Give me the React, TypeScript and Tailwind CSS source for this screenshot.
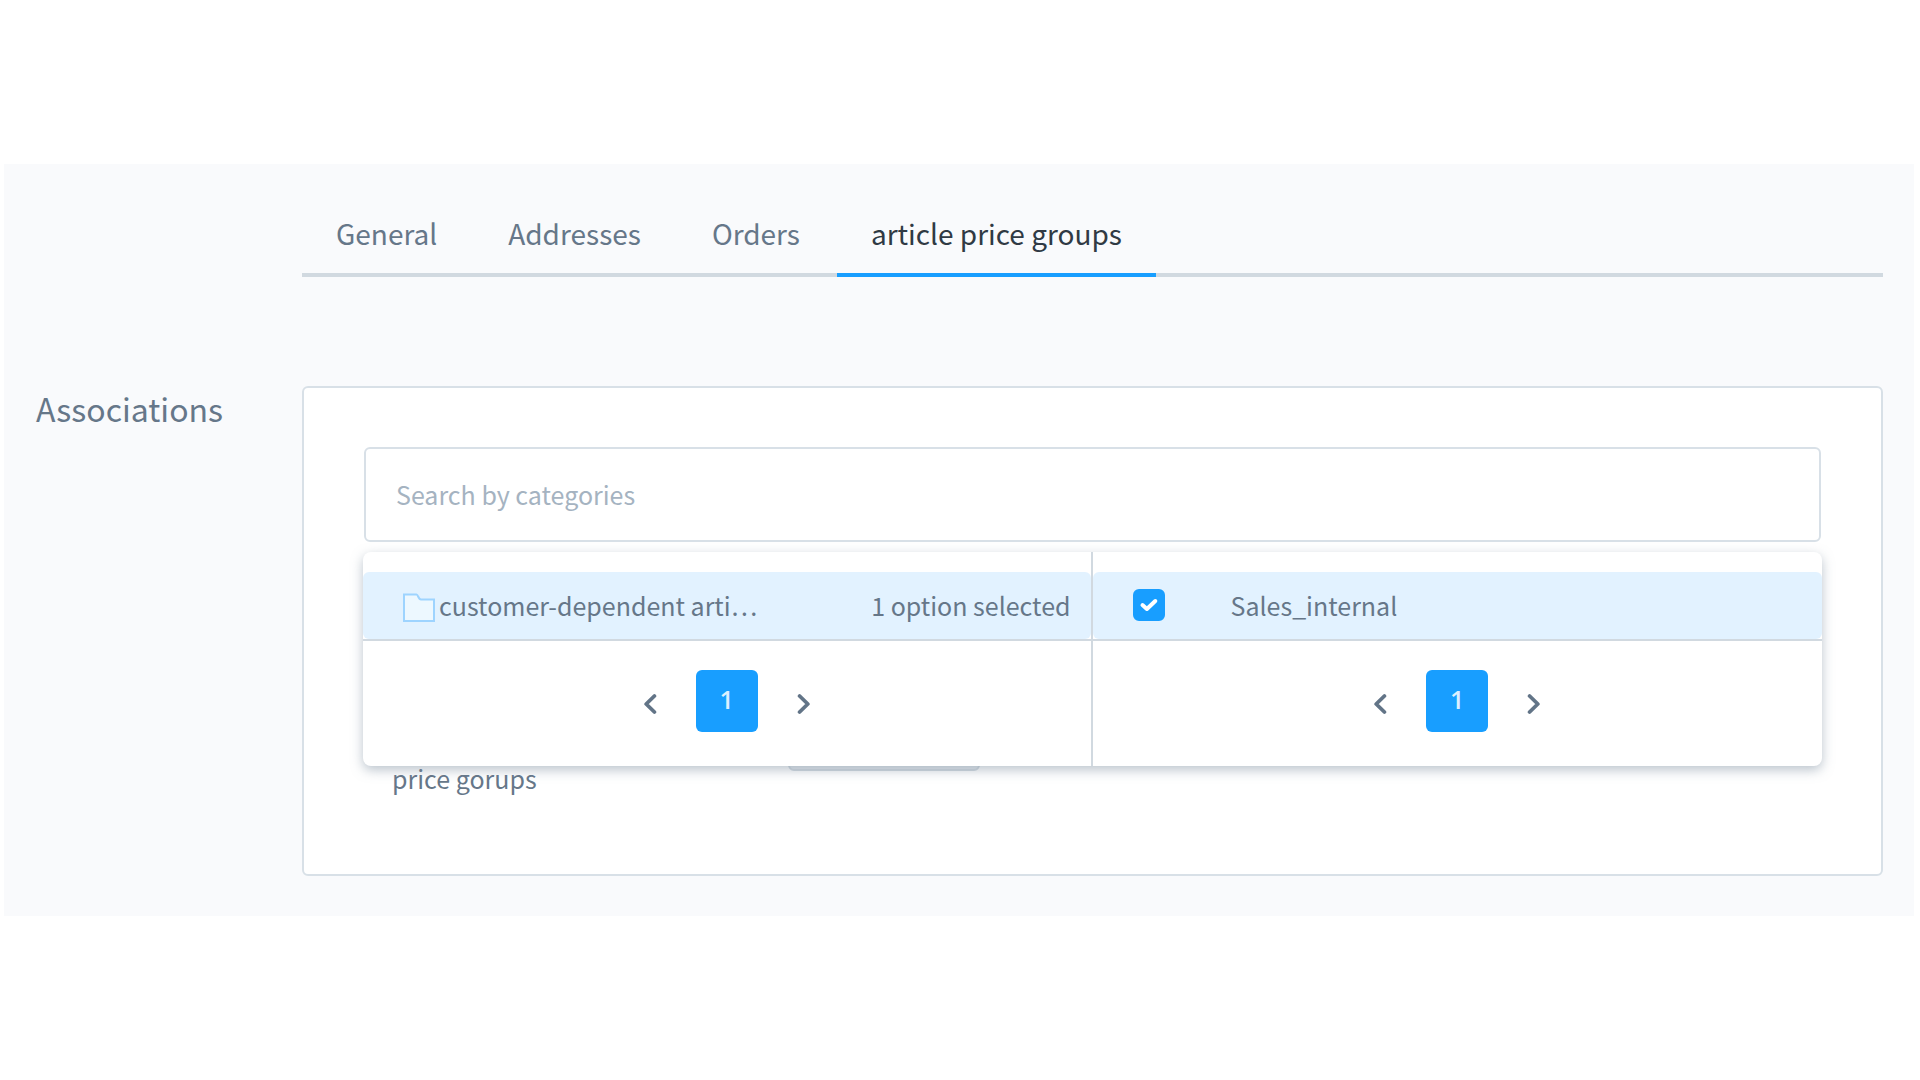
import { useState } from "react";

const tabs = ["General", "Addresses", "Orders", "article price groups"];

function FolderIcon() {
  return (
    <svg width="32" height="30" viewBox="0 0 32 30" className="mt-1.5 shrink-0" aria-hidden="true">
      <path
        d="M1 1.5h12.5c1.6 0 1.8 5 4.5 5h13V28H1z"
        fill="#edf8ff"
        stroke="#9ed4ff"
        strokeWidth="2"
      />
    </svg>
  );
}

function Chevron({ direction }: { direction: "left" | "right" }) {
  return (
    <svg width="14" height="22" viewBox="0 0 14 22" aria-hidden="true">
      <path
        d={direction === "left" ? "M11.4 3L3.2 11l8.2 8" : "M2.6 3l8.2 8-8.2 8"}
        fill="none"
        stroke="#627487"
        strokeWidth="3.8"
        strokeLinecap="round"
        strokeLinejoin="round"
      />
    </svg>
  );
}

function Pagination() {
  return (
    <nav className="flex items-center justify-center gap-[39px] pt-[29px] pb-[34px]" aria-label="Pagination">
      <button type="button" aria-label="Previous page" className="pt-1.5">
        <Chevron direction="left" />
      </button>
      <button
        type="button"
        className="h-[62px] w-[62px] rounded-md bg-[#189eff] pb-0.5 font-['Open_Sans',sans-serif] text-[25px] font-semibold text-[#dcefff]"
      >
        1
      </button>
      <button type="button" aria-label="Next page" className="pt-1.5">
        <Chevron direction="right" />
      </button>
    </nav>
  );
}

export default function App() {
  const [active, setActive] = useState("article price groups");
  const [checked, setChecked] = useState(true);

  return (
    <div className="min-h-screen bg-white pt-[164px] font-['Noto_Sans_CJK_SC',sans-serif] text-[#667789]">
      <main className="mr-1.5 ml-1 bg-[#f9fafc] pt-9 pr-[31px] pb-10 pl-8">
        {/* Tabs */}
        <div role="tablist" className="ml-[266px] flex gap-[3px] border-b-4 border-[#d1d9e0]">
          {tabs.map((tab) => (
            <button
              key={tab}
              type="button"
              role="tab"
              aria-selected={tab === active}
              onClick={() => setActive(tab)}
              className={
                tab === active
                  ? "-mb-1 border-b-4 border-[#189eff] px-[34px] pt-[15px] pb-[21px] text-[28px] leading-[37px] text-[#303a44]"
                  : "-mb-1 border-b-4 border-transparent px-[34px] pt-[15px] pb-[21px] text-[28px] leading-[37px]"
              }
            >
              {tab}
            </button>
          ))}
        </div>

        <div className="mt-[109px] flex">
          <h2 className="w-[266px] shrink-0 text-[32px] leading-[44px]">Associations</h2>

          {/* Card */}
          <section className="min-w-0 flex-1 rounded-md border-2 border-[#d8e0e7] bg-white px-[60px] pt-[59px] pb-[78px]">
            <div className="relative">
              <input
                type="text"
                aria-label="Search by categories"
                placeholder="Search by categories"
                className="block h-[95px] w-full rounded-md border-2 border-[#d8e0e7] bg-white px-[30px] pb-0.5 text-[25px] placeholder:text-[#a5b3c1] focus:outline-none"
              />

              {/* Result popover */}
              <div className="absolute top-full -right-px -left-px z-10 mt-[10px] grid grid-cols-2 divide-x-2 divide-[#d1d9e0] rounded-lg bg-white pt-5 shadow-[0_4px_12px_rgba(120,138,155,0.5)]">
                <div className="-mt-5 pt-5">
                  <div className="flex h-[67px] items-center rounded-md bg-[#e2f2ff] pr-5 pb-0.5 pl-10">
                    <FolderIcon />
                    <span className="ml-1 text-[25px] leading-9">customer-dependent arti…</span>
                    <span className="ml-auto text-[25px] leading-9">1 option selected</span>
                  </div>
                  <div className="border-t-2 border-[#d1d9e0]">
                    <Pagination />
                  </div>
                </div>
                <div className="-mt-5 pt-5">
                  <label className="flex h-[67px] items-center rounded-md bg-[#e2f2ff] pb-0.5 pl-10">
                    <span className="grid">
                      <input
                        type="checkbox"
                        checked={checked}
                        onChange={() => setChecked(!checked)}
                        className="col-start-1 row-start-1 h-8 w-8 appearance-none rounded-md border-2 border-[#d1d9e0] bg-white checked:border-[#189eff] checked:bg-[#189eff]"
                      />
                      {checked && (
                        <svg viewBox="0 0 32 32" className="pointer-events-none col-start-1 row-start-1 h-8 w-8" aria-hidden="true">
                          <path
                            d="M9.5 16l4.4 4 8.4-8"
                            fill="none"
                            stroke="#fff"
                            strokeWidth="4"
                            strokeLinecap="round"
                            strokeLinejoin="round"
                          />
                        </svg>
                      )}
                    </span>
                    <span className="ml-[66px] text-[25px] leading-9">Sales_internal</span>
                  </label>
                  <div className="border-t-2 border-[#d1d9e0]">
                    <Pagination />
                  </div>
                </div>
              </div>
            </div>

            {/* Assigned groups */}
            <div className="mt-[163px] flex items-start px-7">
              <span className="w-[396px] pt-[55px] text-[25px] leading-9">price gorups</span>
              <button
                type="button"
                aria-label="Open price group"
                className="h-[66px] w-48 rounded-md border-2 border-[#d1d9e0] bg-[#e4e9ee]"
              />
            </div>
          </section>
        </div>
      </main>
    </div>
  );
}
